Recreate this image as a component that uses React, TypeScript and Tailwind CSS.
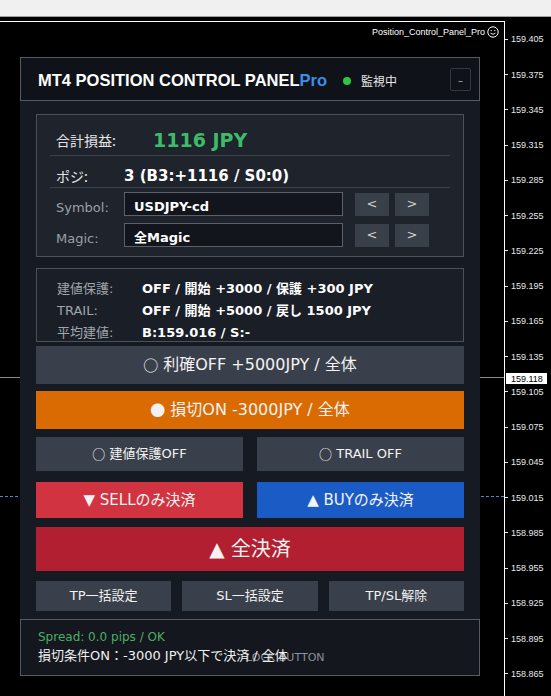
import React from "react";

const F = "font-['DejaVu_Sans','Noto_Sans_CJK_JP',sans-serif]";

const prices = Array.from({ length: 19 }, (_, i) => (159.405 - 0.03 * i).toFixed(3));

function Smiley() {
  return (
    <svg width="12" height="12" viewBox="0 0 12 12" fill="none">
      <circle cx="6" cy="6" r="5.2" stroke="#ffffff" strokeWidth="1" />
      <circle cx="4.2" cy="4.6" r="0.7" fill="#ffffff" />
      <circle cx="7.8" cy="4.6" r="0.7" fill="#ffffff" />
      <path d="M3.6 7.2 Q6 9.4 8.4 7.2" stroke="#ffffff" strokeWidth="0.9" fill="none" />
    </svg>
  );
}

function Btn({ className, children }: { className: string; children: React.ReactNode }) {
  return (
    <div className={`flex items-center justify-center text-[#f2f2f2] ${className}`}>{children}</div>
  );
}

export default function App() {
  return (
    <div className="w-[551px] h-[696px] bg-black flex flex-col overflow-hidden">
      <div className="h-[16px] bg-[#f0f0f0] shrink-0" />
      <div className="h-px bg-[#a0a0a0] shrink-0" />
      <div className="flex flex-1">
        <div className="w-[505px] pt-[4px] flex flex-col">
          <div className="flex-1 border-t border-r border-white relative">
            {/* chart title */}
            <div className="absolute top-[4px] right-[5px] flex items-center gap-[2px] font-['Liberation_Sans',sans-serif] text-[9px] text-white leading-none">
              <span>Position_Control_Panel_Pro</span>
              <Smiley />
            </div>
            {/* bid line */}
            <div className="absolute left-0 right-0 top-[355px] h-px bg-[#8a8a8a]" />
            {/* dashed line */}
            <div className="absolute left-0 right-0 top-[474px] border-t border-dashed border-[#3f8fd2]" />

            {/* panel */}
            <div className={`absolute left-[20px] top-[35px] w-[460px] bg-[#161a22] ${F}`}>
              {/* header */}
              <div className="h-[44px] border border-[#565a62] bg-[#0f1219] flex items-center pl-[17px] pr-[8px] pt-[3px]">
                <span className="font-['Liberation_Sans',sans-serif] font-bold text-[16.5px] text-white">
                  MT4 POSITION CONTROL PANEL<span className="text-[#3d8ee8]">Pro</span>
                </span>
                <span className="ml-[16px] w-[8px] h-[8px] rounded-full bg-[#2fc83c]" />
                <span className="ml-[10px] text-[12px] text-[#e8e8e8] font-['Noto_Sans_CJK_JP',sans-serif]">監視中</span>
                <div className="ml-auto -mt-[3px] w-[21px] h-[23px] border border-[#33373f] rounded-[2px] flex items-center justify-center text-[#b0b0b0] text-[10px] pt-[3px]">
                  –
                </div>
              </div>

              {/* body */}
              <div className="px-4 pt-[13px]">
                {/* box 1 */}
                <div className="h-[143px] border border-[#4b5059] bg-[#1f232b] px-[13px] pt-[11px]">
                  <div className="h-[29px] flex items-center pl-[6px]">
                    <span className="w-[97px] text-[14px] text-[#e4e4e4] font-['Noto_Sans_CJK_JP',sans-serif]">合計損益:</span>
                    <span className="text-[19px] font-bold text-[#3dbb6a] leading-none">1116 JPY</span>
                  </div>
                  <div className="h-px bg-[#3b4049]" />
                  <div className="h-[31px] flex items-center pl-[6px] pt-[9px]">
                    <span className="w-[68px] text-[14px] text-[#e4e4e4] font-['Noto_Sans_CJK_JP',sans-serif]">ポジ:</span>
                    <span className="text-[15px] font-bold text-white leading-none">3 (B3:+1116 / S0:0)</span>
                  </div>
                  <div className="h-px bg-[#3b4049]" />
                  <div className="mt-[4px] flex items-center h-[24px]">
                    <span className="w-[74px] pl-[6px] pt-[6px] text-[13px] text-[#9aa0a8] leading-none">Symbol:</span>
                    <div className="w-[219px] h-[24px] border border-[#5a5f69] bg-[#12151c] flex items-center pl-[9px] pt-[5px]">
                      <span className="text-[13px] font-bold text-white leading-none">USDJPY-cd</span>
                    </div>
                    <div className="ml-[12px] w-[34px] h-[23px] bg-[#3a404a] flex items-center justify-center text-[13px] text-[#d0d0d0]">&lt;</div>
                    <div className="ml-[6px] w-[34px] h-[23px] bg-[#3a404a] flex items-center justify-center text-[13px] text-[#d0d0d0]">&gt;</div>
                  </div>
                  <div className="mt-[7px] flex items-center h-[24px]">
                    <span className="w-[74px] pl-[6px] pt-[6px] text-[13px] text-[#9aa0a8] leading-none">Magic:</span>
                    <div className="w-[219px] h-[24px] border border-[#5a5f69] bg-[#12151c] flex items-center pl-[9px] pt-[5px]">
                      <span className="text-[13px] font-bold text-white leading-none">全Magic</span>
                    </div>
                    <div className="ml-[12px] w-[34px] h-[23px] bg-[#3a404a] flex items-center justify-center text-[13px] text-[#d0d0d0]">&lt;</div>
                    <div className="ml-[6px] w-[34px] h-[23px] bg-[#3a404a] flex items-center justify-center text-[13px] text-[#d0d0d0]">&gt;</div>
                  </div>
                </div>

                {/* box 2 */}
                <div className="mt-[11px] h-[74px] border border-[#4b5059] bg-[#1a1e26] pl-[20px] pt-[9px] overflow-hidden">
                  <div className="h-[22px] flex items-center">
                    <span className="w-[85px] text-[13px] text-[#a0a5ad]">建値保護:</span>
                    <span className="text-[13px] font-bold text-white">OFF / 開始 +3000 / 保護 +300 JPY</span>
                  </div>
                  <div className="h-[22px] flex items-center">
                    <span className="w-[85px] text-[13px] text-[#a0a5ad]">TRAIL:</span>
                    <span className="text-[13px] font-bold text-white">OFF / 開始 +5000 / 戻し 1500 JPY</span>
                  </div>
                  <div className="h-[22px] flex items-center">
                    <span className="w-[85px] text-[13px] text-[#a0a5ad]">平均建値:</span>
                    <span className="text-[13px] font-bold text-white">B:159.016 / S:-</span>
                  </div>
                </div>

                <Btn className="mt-[4px] h-[38px] bg-[#3a404b] text-[16px]">
                  <span className="font-['Noto_Sans_CJK_JP',sans-serif] text-[15px]">○</span>&nbsp;利確OFF +5000JPY / 全体
                </Btn>
                <Btn className="mt-[7px] h-[38px] bg-[#d96b02] text-[16px]">
                  <span className="font-['Noto_Sans_CJK_JP',sans-serif] text-[15px]">●</span>&nbsp;損切ON -3000JPY / 全体
                </Btn>
                <div className="mt-[8px] flex gap-[14px]">
                  <Btn className="flex-1 h-[34px] bg-[#3a404b] text-[13px]">
                    <span className="font-['Noto_Sans_CJK_JP',sans-serif]">○</span>&nbsp;建値保護OFF
                  </Btn>
                  <Btn className="flex-1 h-[34px] bg-[#3a404b] text-[13px]">
                    <span className="font-['Noto_Sans_CJK_JP',sans-serif]">○</span>&nbsp;TRAIL OFF
                  </Btn>
                </div>
                <div className="mt-[11px] flex gap-[14px]">
                  <Btn className="flex-1 h-[36px] bg-[#d13341] text-[15px]">▼ SELLのみ決済</Btn>
                  <Btn className="flex-1 h-[36px] bg-[#1b5bc5] text-[15px]">▲ BUYのみ決済</Btn>
                </div>
                <Btn className="mt-[9px] h-[44px] bg-[#b11f31] text-[20px]">▲ 全決済</Btn>
                <div className="mt-[10px] flex gap-[11px]">
                  <Btn className="flex-1 h-[30px] bg-[#3a404b] text-[13px]">TP一括設定</Btn>
                  <Btn className="flex-1 h-[30px] bg-[#3a404b] text-[13px]">SL一括設定</Btn>
                  <Btn className="flex-1 h-[30px] bg-[#3a404b] text-[13px]">TP/SL解除</Btn>
                </div>
              </div>

              {/* footer */}
              <div className="mt-[8px] h-[57px] border border-[#565a62] bg-[#14171e] pl-[17px] pt-[7px] relative">
                <div className="absolute left-[225px] top-[28px] h-[20px] flex items-center text-[11px] text-[#8c9099]">
                  LOCK BUTTON
                </div>
                <div className="relative h-[19px] flex items-center text-[12px] text-[#4cae64]">Spread: 0.0 pips / OK</div>
                <div className="relative h-[20px] flex items-center text-[13px] text-[#f0f0f0]">損切条件ON：-3000 JPY以下で決済 / 全体</div>
              </div>
            </div>
          </div>
        </div>

        {/* price axis */}
        <div className="flex-1 relative font-['Liberation_Sans',sans-serif] text-[9px] text-[#e8e8e8] leading-[10px]">
          {prices.map((p, i) => {
            const c = 22.3 + 35.25 * i;
            return (
              <div key={p} className="absolute left-0 flex items-center" style={{ top: c - 5 }}>
                <div className="w-[3px] h-px bg-[#e8e8e8]" />
                <span className="ml-[3px]">{p}</span>
              </div>
            );
          })}
          <div className="absolute left-[1px] top-[356px] w-[41px] h-[11px] bg-white text-black flex items-center pl-[5px]">
            159.118
          </div>
        </div>
      </div>
    </div>
  );
}
